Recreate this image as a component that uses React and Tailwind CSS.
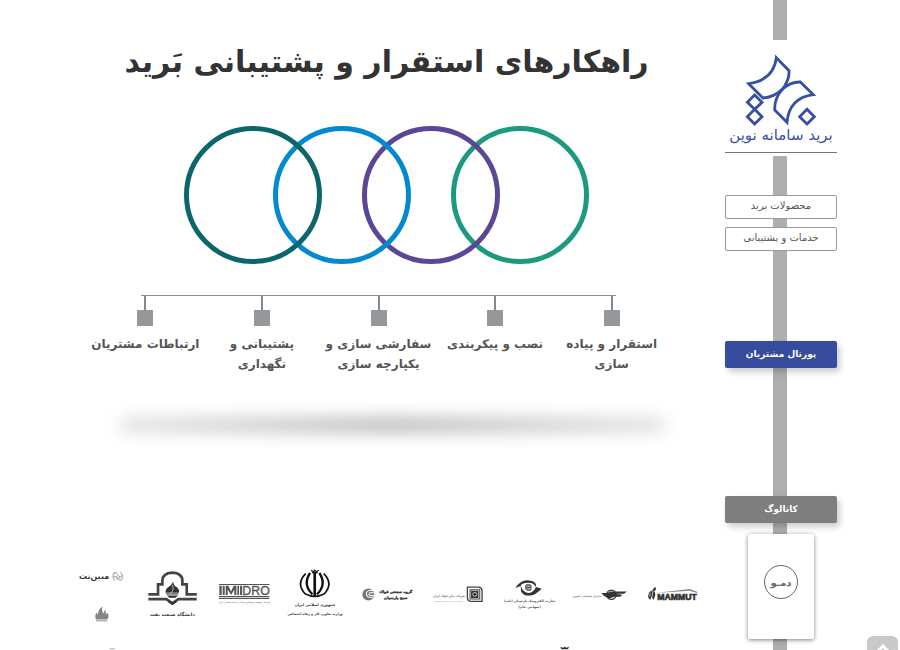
import React from "react";

const rings = ["border-[#1b9a80]", "border-[#5c4797]", "border-[#0289d0]", "border-[#0b666b]"];

const steps = [
  ["استقرار و پیاده", "سازی"],
  ["نصب و پیکربندی"],
  ["سفارشی سازی و", "یکپارچه سازی"],
  ["پشتیبانی و", "نگهداری"],
  ["ارتباطات مشتریان"],
];

function BaridLogo() {
  return (
    <svg viewBox="76 160 336 216" className="h-[72px] w-[112px]" fill="none" stroke="#3850a2" strokeWidth="8.5" aria-hidden="true">
      <path d="M230 171 L268 210 Q270 238 247 267 Q222 290 190 292 L147 249 Q222 238 230 171Z" />
      <path d="M302 244 L341 282 Q268 292 262 365 L225 328 Q224 294 247 267 Q272 243 302 244Z" />
      <path d="M165 283 L187 305 L165 326 L143 305Z M165 326 L187 348 L165 370 L143 348Z M322 326 L344 348 L322 370 L300 348Z" />
    </svg>
  );
}

function Brand({ x, label, children }) {
  return (
    <a href="#" aria-label={label} className="block">
      <svg viewBox={`${x} 0 214 285`} className="block w-full overflow-visible" fill="#333">
        {children}
      </svg>
    </a>
  );
}

function Brands() {
  return (
    <div dir="ltr" className="grid grid-cols-9">
      <Brand x={15} label="مبین نت">
        <text x="102" y="75" textAnchor="middle" fontSize="24" fontWeight="700">مبین‌نت</text>
        <g fill="none" stroke="#aaa" strokeWidth="3">
          <path d="M158 62q8-14 15 0t15-1M158 73q8-13 15 0t15-3M165 55q-13 13 0 25M181 54q13 13 0 26M169 68a5 5 0 1 0 9 0" />
        </g>
        <path fill="#858585" d="M108 196Q102 184 111 175L113 183Q115 164 127 157Q124 171 130 178L135 166Q139 175 137 182L142 176Q149 187 141 196Z" />
        <path fill="#aaa" d="M108 198h34v4h-34z" />
        <path fill="#bbb" d="M147 285q8-8 20 0z" />
      </Brand>

      <Brand x={229} label="دانشگاه صنعت نفت">
        <g fill="none" stroke="#444" strokeWidth="8">
          <path d="M266 121H295V91H308V80C308 62 321 57 338 56C355 57 368 62 368 80V91H381V121H411" />
          <path d="M266 135H320L338 148L356 135H411" />
        </g>
        <path fill="#333" d="M320 121Q313 107 326 99Q336 93 340 83Q343 96 351 99Q363 110 355 121Z" />
        <path fill="none" stroke="#fff" strokeWidth="2" d="M338 93Q345 106 332 119M318 117H358" />
        <path fill="#333" d="M321 124h34l-8 7h-18zM326 138l12 8 12-8v7l-12 8-12-8z" />
        <text x="338" y="187" textAnchor="middle" fontSize="14" fontWeight="700">دانشگاه صنعت نفت</text>
      </Brand>

      <Brand x={444} label="IMIDRO">
        <path fill="#555" d="M477 90h151v3H477zM477 126h151v3H477zM477 131h151v4H477z" />
        <path fill="#555" d="M478 95h7v28h-7zM488 95h6v28h-6zM497 95h8l8 17 8-17h8v28h-6v-17l-10 17-10-17v17h-6zM532 95h5v28h-5zM540 95h6v28h-6z" />
        <text x="588" y="123" textAnchor="middle" fontSize="37" fill="#555" stroke="#555" strokeWidth="1" className="font-['Liberation_Sans']">DRO</text>
        <text x="552" y="147" textAnchor="middle" fontSize="7" fill="#444">سازمان توسعه و نوسازی معادن و صنایع معدنی ایران</text>
      </Brand>

      <Brand x={-2} label="وزارت تعاون، کار و رفاه اجتماعی">
        <g fill="none" stroke="#111">
          <path strokeWidth="8" d="M105 55V128" />
          <path strokeWidth="4" d="M94 49q7 6 11 0q5 6 12 0M97 56h17" />
          <path strokeWidth="7" d="M91 57Q68 91 98 121M119 57Q142 91 112 121" />
          <path strokeWidth="5" d="M78 59Q48 89 76 119Q91 127 105 127Q119 127 134 119Q162 89 132 59" />
        </g>
        <text x="106" y="156" textAnchor="middle" fontSize="11" fontWeight="700">جمهوری اسلامی ایران</text>
        <text x="106" y="184" textAnchor="middle" fontSize="10" fontWeight="700">وزارت تعاون، کار و رفاه اجتماعی</text>
      </Brand>

      <Brand x={212} label="گروه صنعتی فولاد">
        <circle cx="264" cy="121" r="18" fill="#777" />
        <path fill="none" stroke="#fff" strokeWidth="3" d="M281 109H266Q256 113 259 123Q263 133 280 129M283 116H269Q263 121 269 124H283" />
        <text x="346" y="117" textAnchor="middle" fontSize="11" fontWeight="700" stroke="#333" strokeWidth="1">گروه صنعتی فولاد</text>
        <text x="346" y="134" textAnchor="middle" fontSize="11" fontWeight="700" stroke="#333" strokeWidth="1">صبح پارسیان</text>
      </Brand>

      <Brand x={427} label="شرکت ملی فولاد ایران">
        <g fill="none" stroke="#444" strokeWidth="4">
          <path d="M563 99H598Q607 101 607 110V142H572Q563 140 563 131Z" />
          <path strokeWidth="3" d="M571 107h29v28h-29z" />
        </g>
        <path d="M574 110h22v22h-22z" />
        <circle cx="585" cy="121" r="6" stroke="#fff" strokeWidth="2" />
        <text x="507" y="129" textAnchor="middle" fontSize="10">شرکت ملی فولاد ایران</text>
        <text x="507" y="143" textAnchor="middle" fontSize="6" fill="#999" className="font-['Liberation_Sans']">National Iranian Steel Company</text>
      </Brand>

      <Brand x={11} label="تجارت الکترونیک پارسیان">
        <path d="M75 102Q91 76 116 79Q142 82 136 99Q130 85 113 86Q92 87 91 96Z" />
        <path d="M154 104Q138 119 128 123Q101 129 92 112L91 96Q98 114 113 117Q128 117 137 99Z" />
        <circle cx="114" cy="100" r="11" fill="#aaa" />
        <path fill="none" stroke="#555" strokeWidth="3" d="M122 105Q114 113 108 104Q103 94 112 92Q123 93 121 100H108" />
        <text x="118" y="144" textAnchor="middle" fontSize="10" fontWeight="700" fill="#555">تجارت الکترونیک پارسیان (تاپ)</text>
        <text x="118" y="163" textAnchor="middle" fontSize="10" fontWeight="700" fill="#555">(سهامی عام)</text>
      </Brand>

      <Brand x={225} label="سازمان هواپیمایی کشوری">
        <path d="M334 117H353L359 112H410L402 119H375L397 122L390 128H374L357 133L342 126Z" />
        <circle cx="364" cy="122" r="14" fill="none" stroke="#333" strokeWidth="4" />
        <text x="290" y="129" textAnchor="middle" fontSize="8">سازمان هواپیمایی کشوری</text>
        <path d="M211 278l8 3 5-3 5 3 8-3-3 7h-20z" />
      </Brand>

      <Brand x={440} label="MAMMUT">
        <path d="M473 129Q475 110 484 111L494 98Q501 108 491 111Q498 120 492 132L489 138L484 127L479 138Z" />
        <path fill="#888" d="M495 117L598 105L620 113V117L597 110Z" />
        <path fill="none" stroke="#fff" strokeWidth="2" d="M480 116l-2 12M488 109l-3 20" />
        <text x="560" y="137" textAnchor="middle" fontSize="26" fontWeight="700" stroke="#333" strokeWidth="2" className="font-['Liberation_Sans']">MAMMUT</text>
      </Brand>
    </div>
  );
}

function Sidebar() {
  return (
    <aside className="flex w-28 shrink-0 flex-col items-center bg-[linear-gradient(#afadae,#afadae)] bg-[length:14px_100%] bg-[position:48px_0] bg-no-repeat pt-10">
      <a href="#" className="flex w-full flex-col items-center bg-white pt-[14px] text-[#3850a2]">
        <BaridLogo />
        <span className="h-[26px] text-[15px] leading-[18px] font-medium whitespace-nowrap">برید سامانه نوین</span>
        <span className="mb-[3px] h-px w-full bg-[#777]" />
      </a>
      <nav className="mt-[39px] flex w-full flex-col gap-2 text-[10px] text-[#555]">
        <button type="button" className="h-6 rounded-xs border border-[#999] bg-white pb-1">محصولات برید</button>
        <button type="button" className="h-6 rounded-xs border border-[#999] bg-white pb-1">خدمات و پشتیبانی</button>
      </nav>
      <button type="button" className="mt-[90px] h-[27px] w-full rounded-xs bg-[#374c9e] text-[9px] font-bold text-white shadow-[3px_4px_6px_rgba(0,0,0,0.2)]">پورتال مشتریان</button>
      <button type="button" className="mt-32 h-[27px] w-full rounded-xs bg-[#7e7e7e] text-[9px] font-bold text-white shadow-[3px_4px_6px_rgba(0,0,0,0.2)]">کاتالوگ</button>
      <div className="mt-[11px] flex h-[105px] w-[66px] shrink-0 justify-center rounded-xs bg-white pt-[31px] shadow-[0_1px_4px_rgba(0,0,0,0.5)]">
        <button type="button" className="size-[34px] rounded-full border border-[#666] text-[10px] font-bold text-[#666]">دمـو</button>
      </div>
    </aside>
  );
}

export default function App() {
  return (
    <div dir="rtl" className="flex h-screen overflow-hidden bg-white pr-[63px] font-['DejaVu_Sans',sans-serif]">
      <Sidebar />
      <main className="min-w-0 flex-1 pr-[17px] pl-[65px]">
        <h1 className="pt-9 text-center text-[30px] leading-[52px] font-bold whitespace-nowrap text-[#333]">راهکارهای استقرار و پشتیبانی بَرید</h1>

        <div className="mt-[38px] flex justify-center">
          {rings.map((color) => (
            <div key={color} className={`-ms-[49px] size-[138px] shrink-0 rounded-full border-[5px] first:ms-0 ${color}`} />
          ))}
        </div>

        <section className="mt-[31px] mr-[38px] ml-[22px]">
          <div className="mx-[54px] h-px bg-[#8b8d8e]" />
          <ul className="grid grid-cols-5">
            {steps.map((lines) => (
              <li key={lines[0]} className="flex flex-col items-center text-center text-[12px] leading-5 font-bold whitespace-nowrap text-[#555]">
                <span className="h-[14px] w-[2px] bg-[#85888a]" />
                <span className="mb-2 size-4 bg-[#94989b]" />
                {lines.map((line) => (
                  <span key={line}>{line}</span>
                ))}
              </li>
            ))}
          </ul>
          <div className="mt-[43px] mr-1 ml-8 h-4 rounded-full bg-linear-to-r from-[#e4e4e4] via-[#bbb] to-[#e4e4e4] blur-[8px]" />
        </section>

        <div className="mt-[121px]">
          <Brands />
        </div>
      </main>
      <button type="button" aria-label="بازگشت به بالا" className="fixed right-[2px] -bottom-4 flex h-[30px] w-[31px] justify-center rounded-md bg-[#c9c9c9] pt-[7px]">
        <svg viewBox="0 0 20 20" className="size-5" fill="none" stroke="#fff" strokeWidth="3" aria-hidden="true">
          <path d="M4 9l6-6 6 6M5 15l5-5 5 5" />
        </svg>
      </button>
    </div>
  );
}
